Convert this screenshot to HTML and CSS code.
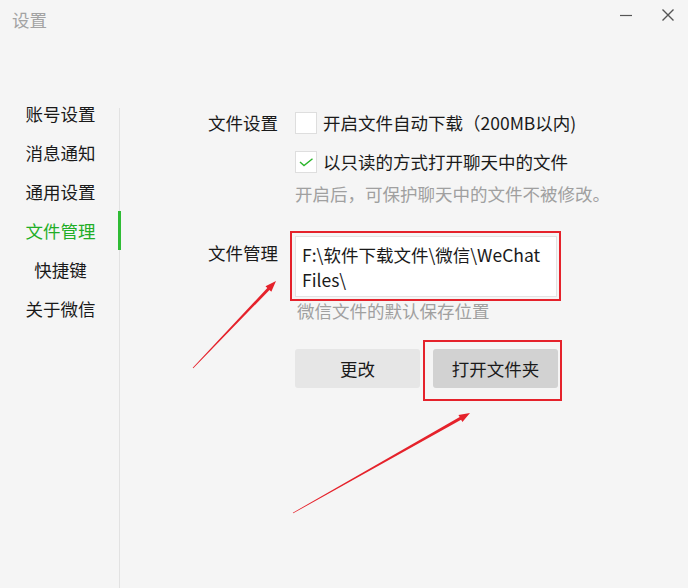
FILE: index.html
```html
<!DOCTYPE html>
<html lang="zh-CN">
<head>
<meta charset="utf-8">
<title>设置</title>
<link rel="stylesheet" href="styles.css">
</head>
<body>
<div class="window">
  <header class="titlebar">
    <div class="title">设置</div>
    <div class="controls">
      <span class="ctl min"><svg width="12" height="12" viewBox="0 0 12 12"><path d="M0 6.5H12" stroke="#555" stroke-width="1.2"/></svg></span>
      <span class="ctl close"><svg width="12" height="12" viewBox="0 0 12 12"><path d="M0.5 0.5L11.5 11.5M11.5 0.5L0.5 11.5" stroke="#555" stroke-width="1.4"/></svg></span>
    </div>
  </header>

  <div class="content">
    <nav class="sidebar">
      <div class="nav-item">账号设置</div>
      <div class="nav-item">消息通知</div>
      <div class="nav-item">通用设置</div>
      <div class="nav-item active">文件管理</div>
      <div class="nav-item">快捷键</div>
      <div class="nav-item">关于微信</div>
    </nav>

    <main class="main">
      <section class="section">
        <div class="label label-row">文件设置</div>
        <div class="fields">
          <div class="option"><span class="box"></span><span>开启文件自动下载（200MB以内)</span></div>
          <div class="option"><span class="box"><svg width="22" height="22" viewBox="0 0 22 22"><path d="M5 11L9 14.6L17.5 7.8" fill="none" stroke="#2bb52b" stroke-width="1.4"/></svg></span><span>以只读的方式打开聊天中的文件</span></div>
          <div class="hint">开启后，可保护聊天中的文件不被修改。</div>
        </div>
      </section>

      <section class="section second">
        <div class="label label-top">文件管理</div>
        <div class="fields">
          <div class="path">F:\软件下载文件\微信\WeChat Files\</div>
          <div class="hint hint-path">微信文件的默认保存位置</div>
          <div class="buttons">
            <button class="btn">更改</button>
            <button class="btn dark">打开文件夹</button>
          </div>
        </div>
      </section>
    </main>
  </div>

  <svg class="annot" width="688" height="588" viewBox="0 0 688 588">
    <rect x="291" y="232" width="269" height="68" fill="none" stroke="#e5222b" stroke-width="2"/>
    <rect x="424" y="341" width="137" height="59" fill="none" stroke="#e5222b" stroke-width="2"/>
    <polygon fill="#e5222b" points="192.7,367.7 267.3,288.0 265.5,286.2 276,281 271.3,291.8 269.5,290.0 193.3,368.3"/>
    <polygon fill="#e5222b" points="292.8,512.7 459.7,417.1 458.4,414.9 470,413 462.4,421.9 461.1,419.7 293.2,513.3"/>
  </svg>
</div>
</body>
</html>
```

FILE: styles.css
```css
* { box-sizing: border-box; }
html, body {
  margin: 0;
  padding: 0;
  background: #f5f5f5;
}
body {
  font-family: "Noto Sans CJK SC", "Noto Sans", sans-serif;
  font-size: 17.5px;
  color: #1a1a1a;
}
.window {
  position: relative;
  width: 688px;
  height: 588px;
  overflow: hidden;
  background: #f5f5f5;
}
.titlebar {
  height: 39px;
  display: flex;
  justify-content: space-between;
  padding-left: 12px;
}
.title {
  color: #a3a3a3;
  line-height: 39px;
}
.controls {
  display: flex;
  align-items: flex-start;
  padding-top: 9px;
  padding-right: 14px;
  gap: 30px;
}
.ctl {
  display: block;
  width: 12px;
  height: 12px;
}
.ctl svg { display: block; }
.min { margin-top: 0; }
.content {
  display: flex;
  margin-top: 55px;
  height: 494px;
}
.sidebar {
  width: 121px;
  flex: none;
  background: linear-gradient(#e2e2e2, #e2e2e2) no-repeat right 1px top 14px / 1px 100%;
}
.nav-item {
  height: 39px;
  line-height: 39px;
  text-align: center;
  border-right: 3px solid transparent;
  padding-left: 3px;
}
.nav-item.active {
  color: #1fae27;
  border-right-color: #2fbc35;
}
.main {
  flex: 1;
  padding-left: 87px;
  padding-top: 9px;
}
.section {
  display: flex;
}
.label {
  width: 87px;
  flex: none;
}
.label-row { line-height: 39px; }
.label-top { line-height: 25px; padding-top: 4px; }
.fields {
  display: flex;
  flex-direction: column;
}
.option {
  height: 39px;
  display: flex;
  align-items: center;
  gap: 6px;
}
.box {
  width: 22px;
  height: 22px;
  background: #fff;
  border: 1px solid #dedede;
  flex: none;
  position: relative;
}
.box svg {
  display: block;
  margin: -1px;
}
.hint {
  color: #a0a0a0;
  line-height: 25px;
}
.second {
  margin-top: 30px;
}
.path {
  width: 262px;
  height: 61px;
  background: #fff;
  border: 1px solid #e3e3e3;
  padding: 5px 6px 4px 6px;
  line-height: 25px;
}
.hint-path {
  margin-top: 2px;
  padding-left: 2px;
  line-height: 24px;
}
.buttons {
  display: flex;
  gap: 13px;
  margin-top: 26px;
}
.btn {
  width: 125px;
  height: 39px;
  border: none;
  border-radius: 3px;
  background: #e6e6e6;
  font-family: inherit;
  font-size: 17.5px;
  color: #1a1a1a;
  padding: 0;
}
.btn.dark {
  background: #d2d2d2;
}
.annot {
  position: absolute;
  left: 0;
  top: 0;
  pointer-events: none;
}
```
